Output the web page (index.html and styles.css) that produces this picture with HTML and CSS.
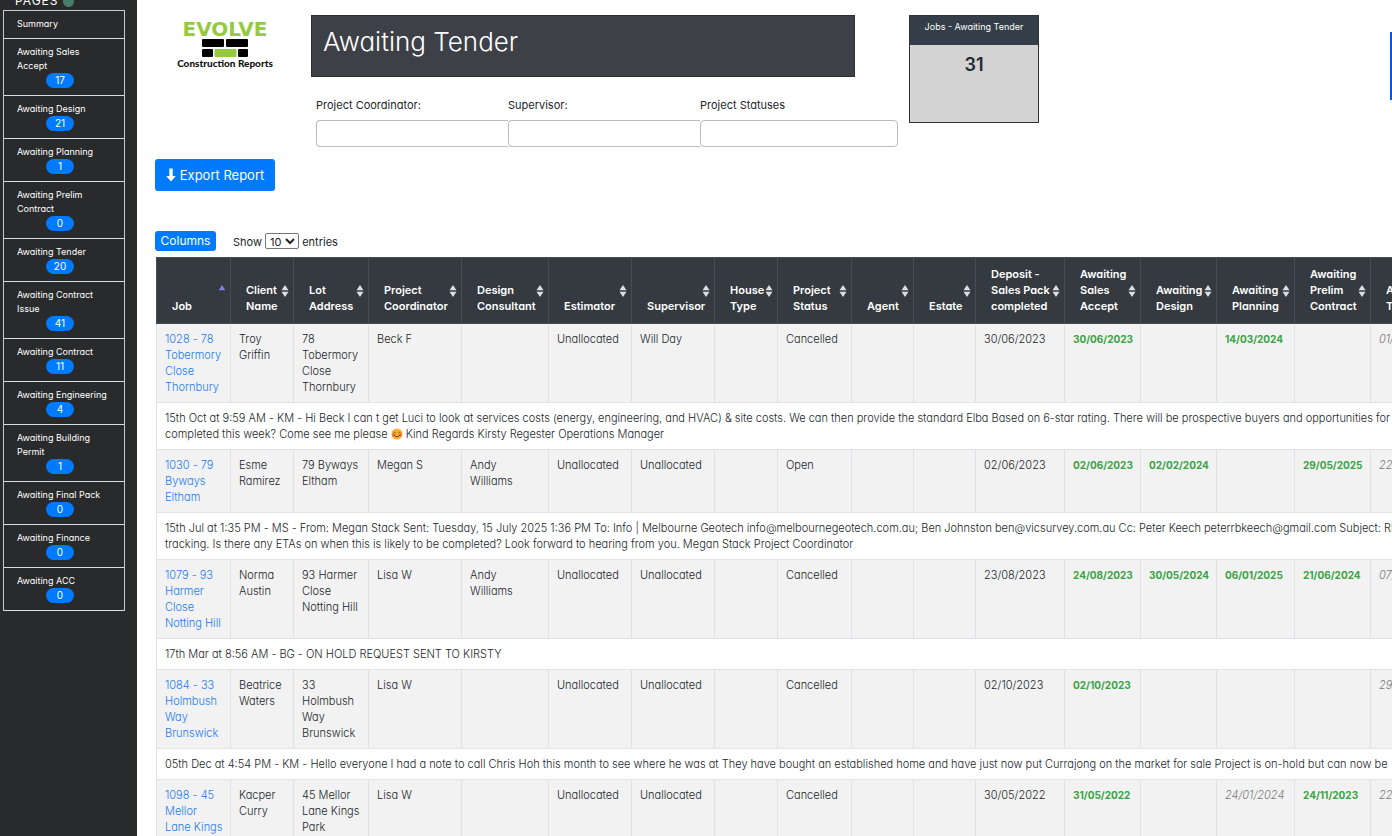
FILE: index.html
```html
<!DOCTYPE html>
<html lang="en">
  <head>
    <title>Awaiting Tender</title>
    <meta charset="UTF-8" />
    <meta name="viewport" content="width=device-width, initial-scale=1.0" />
    <link rel="stylesheet" href="styles.css">
  </head>
  <body>
    <svg class="sprite" aria-hidden="true">
      <symbol id="sort" viewBox="0 0 8 12">
        <path d="M4 0 L7.5 5.3 H0.5 Z M4 12 L7.5 6.7 H0.5 Z" fill="#dcdfe2" />
      </symbol>
      <symbol id="sort-asc" viewBox="0 0 8 12">
        <path d="M4 0 L7.3 5.3 H0.7 Z" fill="#7f7fe8" />
      </symbol>
    </svg>

    <nav class="sidebar">
      <h2>PAGES <span class="dot"></span></h2>
      <ul>
        <li><a href="#">Summary</a></li>
        <li><a href="#">Awaiting Sales<br />Accept <span class="badge">17</span></a></li>
        <li><a href="#">Awaiting Design <span class="badge">21</span></a></li>
        <li><a href="#">Awaiting Planning <span class="badge">1</span></a></li>
        <li><a href="#">Awaiting Prelim<br />Contract <span class="badge">0</span></a></li>
        <li><a href="#">Awaiting Tender <span class="badge">20</span></a></li>
        <li><a href="#">Awaiting Contract<br />Issue <span class="badge">41</span></a></li>
        <li><a href="#">Awaiting Contract <span class="badge">11</span></a></li>
        <li><a href="#">Awaiting Engineering <span class="badge">4</span></a></li>
        <li><a href="#">Awaiting Building<br />Permit <span class="badge">1</span></a></li>
        <li><a href="#">Awaiting Final Pack <span class="badge">0</span></a></li>
        <li><a href="#">Awaiting Finance <span class="badge">0</span></a></li>
        <li><a href="#">Awaiting ACC <span class="badge">0</span></a></li>
      </ul>
    </nav>

    <main>
      <header class="top">
        <div class="logo">
          <strong>EVOLVE</strong>
          <svg width="46" height="18" viewBox="0 0 46 18" aria-hidden="true">
            <rect x="0" y="0" width="22" height="8" rx="1" />
            <rect x="24" y="0" width="22" height="8" rx="1" />
            <rect x="0" y="10" width="11" height="8" rx="1" />
            <rect x="12.500" y="10" width="22" height="8" rx="1" fill="#96c93d" />
            <rect x="36" y="10" width="10" height="8" rx="1" />
          </svg>
          <span>Construction Reports</span>
        </div>
        <div class="heading">
          <h1>Awaiting Tender</h1>
          <form class="filters">
            <div class="field">
              <label for="coordinator">Project Coordinator:</label>
              <input type="text" id="coordinator" name="coordinator" />
            </div>
            <div class="field">
              <label for="supervisor">Supervisor:</label>
              <input type="text" id="supervisor" name="supervisor" />
            </div>
            <div class="field">
              <label for="statuses">Project Statuses</label>
              <input type="text" id="statuses" name="statuses" />
            </div>
          </form>
        </div>
        <div class="card">
          <h3>Jobs - Awaiting Tender</h3>
          <p>31</p>
        </div>
        <button class="side-tab" type="button" aria-label="Open panel"></button>
      </header>

      <button class="btn export" type="button">
        <svg width="10" height="14" viewBox="0 0 10 14" aria-hidden="true">
          <path d="M3.300 0.500 H6.700 V8 H9.800 L5 13.500 L0.200 8 H3.300 Z" fill="#fff" />
        </svg>
        Export Report
      </button>

      <div class="toolbar">
        <button class="btn columns" type="button">Columns</button>
        <label for="length">Show
          <select id="length" name="length">
            <option>10</option>
            <option>25</option>
            <option>50</option>
          </select>
          entries</label>
      </div>

      <table>
        <colgroup>
          <col class="w74" /><col class="w63" /><col class="w75" /><col class="w93" />
          <col class="w87" /><col class="w83" /><col class="w83" /><col class="w63" />
          <col class="w74" /><col class="w62" /><col class="w62" /><col class="w89" />
          <col class="w76" /><col class="w76" /><col class="w78" /><col class="w76" />
          <col class="w78" />
        </colgroup>
        <thead>
          <tr>
            <th>Job<svg class="sort"><use href="#sort-asc" /></svg></th>
            <th>Client<br />Name<svg class="sort"><use href="#sort" /></svg></th>
            <th>Lot<br />Address<svg class="sort"><use href="#sort" /></svg></th>
            <th>Project<br />Coordinator<svg class="sort"><use href="#sort" /></svg></th>
            <th>Design<br />Consultant<svg class="sort"><use href="#sort" /></svg></th>
            <th>Estimator<svg class="sort"><use href="#sort" /></svg></th>
            <th>Supervisor<svg class="sort"><use href="#sort" /></svg></th>
            <th>House<br />Type<svg class="sort"><use href="#sort" /></svg></th>
            <th>Project<br />Status<svg class="sort"><use href="#sort" /></svg></th>
            <th>Agent<svg class="sort"><use href="#sort" /></svg></th>
            <th>Estate<svg class="sort"><use href="#sort" /></svg></th>
            <th>Deposit -<br />Sales Pack<br />completed<svg class="sort"><use href="#sort" /></svg></th>
            <th>Awaiting<br />Sales<br />Accept<svg class="sort"><use href="#sort" /></svg></th>
            <th>Awaiting<br />Design<svg class="sort"><use href="#sort" /></svg></th>
            <th>Awaiting<br />Planning<svg class="sort"><use href="#sort" /></svg></th>
            <th>Awaiting<br />Prelim<br />Contract<svg class="sort"><use href="#sort" /></svg></th>
            <th>Awaiting<br />Tender<svg class="sort"><use href="#sort" /></svg></th>
          </tr>
        </thead>
        <tbody>
          <tr>
            <td><a href="#">1028 - 78<br />Tobermory<br />Close<br />Thornbury</a></td>
            <td>Troy<br />Griffin</td>
            <td>78<br />Tobermory<br />Close<br />Thornbury</td>
            <td>Beck F</td>
            <td></td>
            <td>Unallocated</td>
            <td>Will Day</td>
            <td></td>
            <td>Cancelled</td>
            <td></td>
            <td></td>
            <td>30/06/2023</td>
            <td class="done">30/06/2023</td>
            <td></td>
            <td class="done">14/03/2024</td>
            <td></td>
            <td class="due">01/04/2024</td>
          </tr>
          <tr class="note">
            <td colspan="17">15th Oct at 9:59 AM - KM - Hi Beck I can t get Luci to look at services costs (energy, engineering, and HVAC) &amp; site costs. We can then provide the standard Elba Based on 6-star rating. There will be prospective buyers and opportunities for<br />completed this week? Come see me please <svg class="emoji" viewBox="0 0 12 12" role="img" aria-label="smile"><circle cx="6" cy="6" r="5.500" fill="#fbb02d" /><circle cx="2.500" cy="7" r="1.500" fill="#f4694c" /><circle cx="9.500" cy="7" r="1.500" fill="#f4694c" /><path d="M2.500 5 Q3.500 3.500 4.500 5 M7.500 5 Q8.500 3.500 9.500 5 M3 7 Q6 10.500 9 7" fill="none" stroke="#6b3a12" /></svg> Kind Regards Kirsty Regester Operations Manager</td>
          </tr>
          <tr>
            <td><a href="#">1030 - 79<br />Byways<br />Eltham</a></td>
            <td>Esme<br />Ramirez</td>
            <td>79 Byways<br />Eltham</td>
            <td>Megan S</td>
            <td>Andy<br />Williams</td>
            <td>Unallocated</td>
            <td>Unallocated</td>
            <td></td>
            <td>Open</td>
            <td></td>
            <td></td>
            <td>02/06/2023</td>
            <td class="done">02/06/2023</td>
            <td class="done">02/02/2024</td>
            <td></td>
            <td class="done">29/05/2025</td>
            <td class="due">22/06/2025</td>
          </tr>
          <tr class="note">
            <td colspan="17">15th Jul at 1:35 PM - MS - From: Megan Stack Sent: Tuesday, 15 July 2025 1:36 PM To: Info | Melbourne Geotech info@melbournegeotech.com.au; Ben Johnston ben@vicsurvey.com.au Cc: Peter Keech peterrbkeech@gmail.com Subject: RE:<br />tracking. Is there any ETAs on when this is likely to be completed? Look forward to hearing from you. Megan Stack Project Coordinator</td>
          </tr>
          <tr>
            <td><a href="#">1079 - 93<br />Harmer<br />Close<br />Notting Hill</a></td>
            <td>Norma<br />Austin</td>
            <td>93 Harmer<br />Close<br />Notting Hill</td>
            <td>Lisa W</td>
            <td>Andy<br />Williams</td>
            <td>Unallocated</td>
            <td>Unallocated</td>
            <td></td>
            <td>Cancelled</td>
            <td></td>
            <td></td>
            <td>23/08/2023</td>
            <td class="done">24/08/2023</td>
            <td class="done">30/05/2024</td>
            <td class="done">06/01/2025</td>
            <td class="done">21/06/2024</td>
            <td class="due">07/07/2024</td>
          </tr>
          <tr class="note">
            <td colspan="17">17th Mar at 8:56 AM - BG - ON HOLD REQUEST SENT TO KIRSTY</td>
          </tr>
          <tr>
            <td><a href="#">1084 - 33<br />Holmbush<br />Way<br />Brunswick</a></td>
            <td>Beatrice<br />Waters</td>
            <td>33<br />Holmbush<br />Way<br />Brunswick</td>
            <td>Lisa W</td>
            <td></td>
            <td>Unallocated</td>
            <td>Unallocated</td>
            <td></td>
            <td>Cancelled</td>
            <td></td>
            <td></td>
            <td>02/10/2023</td>
            <td class="done">02/10/2023</td>
            <td></td>
            <td></td>
            <td></td>
            <td class="due">29/11/2023</td>
          </tr>
          <tr class="note">
            <td colspan="17">05th Dec at 4:54 PM - KM - Hello everyone I had a note to call Chris Hoh this month to see where he was at They have bought an established home and have just now put Currajong on the market for sale Project is on-hold but can now be</td>
          </tr>
          <tr>
            <td><a href="#">1098 - 45<br />Mellor<br />Lane Kings<br />Park</a></td>
            <td>Kacper<br />Curry</td>
            <td>45 Mellor<br />Lane Kings<br />Park</td>
            <td>Lisa W</td>
            <td></td>
            <td>Unallocated</td>
            <td>Unallocated</td>
            <td></td>
            <td>Cancelled</td>
            <td></td>
            <td></td>
            <td>30/05/2022</td>
            <td class="done">31/05/2022</td>
            <td></td>
            <td class="due">24/01/2024</td>
            <td class="done">24/11/2023</td>
            <td class="due">22/12/2023</td>
          </tr>
        </tbody>
      </table>
    </main>
  </body>
</html>
```
FILE: styles.css
```css
* {
  box-sizing: border-box;
}
body {
  margin: 0;
  display: flex;
  height: 100vh;
  overflow: hidden;
  font-family: Inter, "Open Sans", sans-serif;
  font-feature-settings: "cv11";
  font-size: 11px;
  line-height: 16px;
  color: #212529;
  background-color: #fff;
}
h1, h2, h3, p, ul {
  margin: 0;
  padding: 0;
}
button, input, select {
  font: inherit;
  font-feature-settings: inherit;
}
.sprite {
  position: absolute;
  width: 0;
  height: 0;
}

/* sidebar */
.sidebar {
  flex: none;
  width: 137px;
  padding: 0 12px 0 3px;
  background-color: #282a2c;
  overflow: hidden;
}
.sidebar h2 {
  display: flex;
  align-items: center;
  gap: 4px;
  height: 18px;
  margin-top: -8px;
  padding-left: 12px;
  color: #fff;
  font-size: 12px;
  font-weight: 400;
  letter-spacing: 1px;
}
.dot {
  width: 11px;
  height: 11px;
  border-radius: 50%;
  background-color: #4a7c6c;
}
.sidebar ul {
  list-style: none;
  border: 1px solid #c9cbcc;
  border-bottom: 0;
}
.sidebar a {
  display: block;
  padding: 6px 13px 7px;
  border-bottom: 1px solid #dcdedf;
  color: #fff;
  font-size: 9px;
  line-height: 14px;
  text-decoration: none;
  white-space: nowrap;
}
.badge {
  display: block;
  width: 28px;
  margin: 0 auto 0 29px;
  border-radius: 8px;
  background-color: #007bff;
  font-size: 10px;
  line-height: 15px;
  text-align: center;
}

/* top area */
main {
  flex: 1;
  min-width: 0;
  padding: 15px 0 0 18px;
  overflow: hidden;
}
.top {
  display: flex;
  align-items: flex-start;
}
.logo {
  display: flex;
  flex-direction: column;
  align-items: center;
  width: 140px;
  margin-right: 16px;
  padding-top: 4px;
  color: #111;
}
.logo strong {
  color: #96c93d;
  font-family: "DejaVu Sans", sans-serif;
  font-size: 20px;
  font-weight: 700;
  line-height: 20px;
}
.logo span {
  font-family: Lato, sans-serif;
  font-size: 10px;
  font-weight: 900;
  line-height: 12px;
}
.heading {
  width: 587px;
  margin-right: 11px;
}
h1 {
  width: 544px;
  height: 62px;
  padding: 12px 11px;
  border: 1px solid #2c3036;
  background-color: #3d4047;
  color: #fff;
  font-size: 26px;
  font-weight: 300;
  line-height: 28px;
}
.filters {
  display: flex;
  margin: 20px 0 0 5px;
}
.field {
  width: 192px;
}
.field:last-child {
  width: 198px;
}
.field label {
  display: block;
  margin-bottom: 7px;
}
.field input {
  display: block;
  width: 100%;
  height: 27px;
  border: 1px solid #bbb;
  border-radius: 4px 0 0 4px;
  border-right: 0;
  background-color: #fff;
}
.field:last-child input {
  border-right: 1px solid #bbb;
  border-radius: 4px;
}
.card {
  width: 130px;
  height: 108px;
  border: 1px solid #333;
  background-color: #d3d3d3;
  text-align: center;
}
.card h3 {
  height: 29px;
  padding-top: 3px;
  background-color: #333e48;
  color: #fff;
  font-size: 9px;
  font-weight: 400;
}
.card p {
  padding-top: 8px;
  color: #1f2933;
  font-size: 18px;
  font-weight: 600;
  line-height: 24px;
}
.side-tab {
  width: 2px;
  height: 68px;
  margin: 17px 0 0 auto;
  padding: 0;
  border: 0;
  background-color: #0055ff;
}
.btn {
  border: 0;
  border-radius: 3px;
  background-color: #007bff;
  color: #fff;
  cursor: pointer;
}
.export {
  display: flex;
  align-items: center;
  justify-content: center;
  gap: 4px;
  width: 120px;
  height: 32px;
  margin-top: 12px;
  padding: 0;
  font-size: 13px;
  white-space: nowrap;
}
.toolbar {
  display: flex;
  align-items: center;
  gap: 17px;
  margin: 40px 0 6px;
}
.columns {
  width: 61px;
  height: 20px;
  padding: 0;
  font-size: 12px;
}
.toolbar select {
  width: 34px;
  height: 16px;
  padding: 0;
  border: 1px solid #767676;
  border-radius: 2px;
  background-color: #fff;
  color: #222;
}

/* jobs table */
table {
  width: 1292px;
  margin-left: 1px;
  border-collapse: collapse;
  table-layout: fixed;
}
th, td {
  border: 1px solid #dee2e6;
  text-align: left;
  white-space: nowrap;
}
th {
  position: relative;
  height: 66px;
  padding: 8px 0 9px 15px;
  border-color: #454d55;
  background-color: #343a40;
  color: #fff;
  font-weight: 600;
  vertical-align: bottom;
}
.sort {
  position: absolute;
  top: 27px;
  right: 4px;
  width: 8px;
  height: 12px;
}
td {
  padding: 7px 0 7px 8px;
  background-color: #f2f2f2;
  font-weight: 300;
  vertical-align: top;
}
td a {
  color: #1a7bf5;
  text-decoration: none;
}
.note td {
  background-color: #fff;
}
.done {
  color: #38a343;
  font-size: 10px;
  font-weight: 700;
}
.due {
  color: #777;
  font-style: italic;
}
.emoji {
  width: 12px;
  height: 12px;
  vertical-align: -2px;
}
.w62 { width: 62px; }
.w63 { width: 63px; }
.w74 { width: 74px; }
.w75 { width: 75px; }
.w76 { width: 76px; }
.w78 { width: 78px; }
.w83 { width: 83px; }
.w87 { width: 87px; }
.w89 { width: 89px; }
.w93 { width: 93px; }
```
